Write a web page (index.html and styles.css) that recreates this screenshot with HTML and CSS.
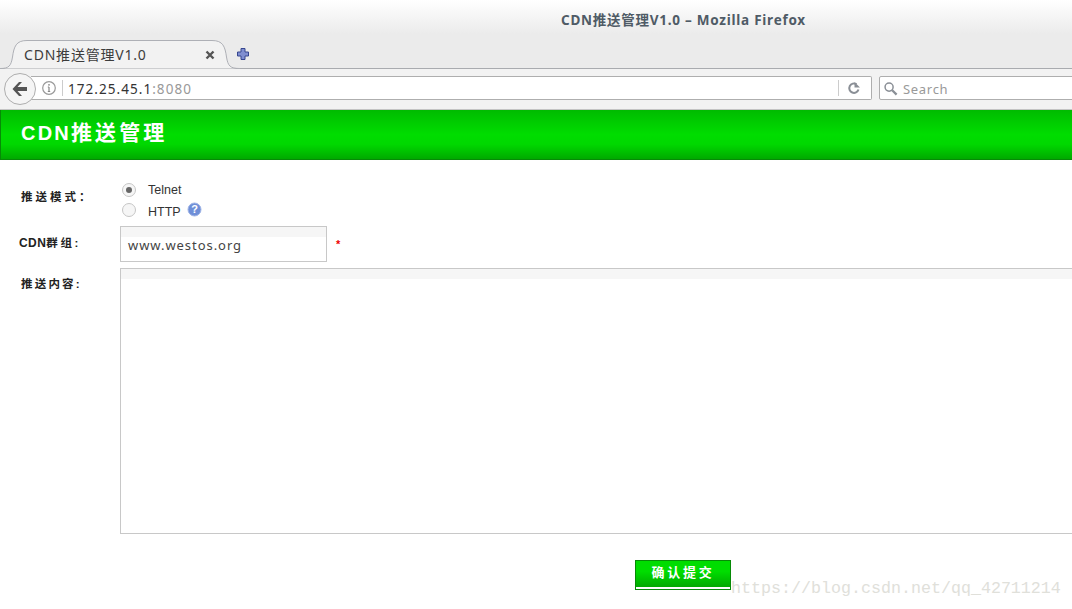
FILE: index.html
```html
<!DOCTYPE html>
<html lang="zh">
<head>
<meta charset="utf-8">
<title>CDN推送管理V1.0</title>
<link rel="stylesheet" href="styles.css">
</head>
<body>
<div class="browser">
  <div class="titlebar">CDN推送管理V1.0 – Mozilla Firefox</div>
  <div class="tabstrip">
    <div class="tab">
      <svg class="tab-shape" width="240" height="30" viewBox="0 0 240 30"><path d="M0 28.500C9 28.500 11 26 12.500 17C14 6.500 16 .5 27 .5H212C223 .5 225 6.500 226.500 17C228 26 230 28.500 240 28.500" fill="#f2f2f2" stroke="#aeb0b6" stroke-width="1"/></svg>
      <span class="tab-title">CDN推送管理V1.0</span>
      <svg class="tab-close" width="10" height="10" viewBox="0 0 10 10"><path d="M1.500 1.500L8.500 8.500M8.500 1.500L1.500 8.500" stroke="#555" stroke-width="2.400"/></svg>
    </div>
    <svg class="newtab" width="14" height="14" viewBox="0 0 14 14"><path d="M5 1.500H9V5H12.500V9H9V12.500H5V9H1.500V5H5Z" fill="#7f8ed0" stroke="#36468f" stroke-width="1"/></svg>
  </div>
  <div class="toolbar">
    <div class="back"><svg width="18" height="16" viewBox="0 0 18 16"><path d="M8 1L1.500 8L8 15H11L6.500 10H16V6H6.500L11 1Z" fill="#555"/></svg></div>
    <div class="urlbar">
      <svg class="info" width="16" height="16" viewBox="0 0 16 16"><circle cx="8" cy="8" r="6.300" fill="none" stroke="#999" stroke-width="1.200"/><path d="M8 7V11.500M6.800 11.500H9.200M6.800 7H8" stroke="#888" stroke-width="1.200" fill="none"/><circle cx="8" cy="4.800" r=".9" fill="#888"/></svg>
      <span class="sep"></span>
      <span class="url"><span class="url-host">172.25.45.1</span>:8080</span>
      <svg class="reload" width="14" height="14" viewBox="0 0 14 14"><path d="M11.500 8.500A4.700 4.700 0 1 1 9.500 3.200" fill="none" stroke="#8a8f96" stroke-width="2"/><path d="M7.500 1V6.500H13Z" fill="#8a8f96"/></svg>
    </div>
    <div class="searchbar">
      <svg width="15" height="15" viewBox="0 0 16 16"><circle cx="6.500" cy="6.500" r="4.300" fill="none" stroke="#8a8f96" stroke-width="1.600"/><path d="M9.800 9.800L14.500 14.500" stroke="#8a8f96" stroke-width="2.400"/></svg>
      <span class="search-text">Search</span>
    </div>
  </div>
</div>
<div class="banner">CDN<span class="banner-cjk">推送管理</span></div>
<form class="form">
  <div class="row row-mode">
    <div class="label label-mode">推送模式：</div>
    <div class="radios">
      <div class="radio-line"><span class="radio radio-on"></span><span>Telnet</span></div>
      <div class="radio-line"><span class="radio radio-raised"></span><span>HTTP</span>
        <svg class="help" width="15" height="15" viewBox="0 0 15 15"><circle cx="7.500" cy="7.500" r="6.500" fill="#6f8fd8" stroke="#9fb4e6"/><text x="7.500" y="11" text-anchor="middle" class="help-q">?</text></svg>
      </div>
    </div>
  </div>
  <div class="row row-group">
    <div class="label label-group"><b>CDN</b>群组:</div>
    <div class="input">www.westos.org</div>
    <span class="req">*</span>
  </div>
  <div class="row row-content">
    <div class="label label-content">推送内容:</div>
    <div class="textarea"></div>
  </div>
  <div class="submit-row"><div class="submit"><span>确认提交</span></div></div>
</form>
<div class="watermark">https://blog.csdn.net/qq_42711214</div>
</body>
</html>
```
FILE: styles.css
```css
* { box-sizing: border-box; }
html, body { margin: 0; height: 609px; overflow: hidden; background: #fff; }
body { width: 1072px; position: relative; font-family: "Liberation Sans", "Noto Sans CJK SC", sans-serif; }
.browser { background: #ebebeb; }
.titlebar {
  height: 34px; padding: 11px 0 0 561px;
  font: 700 13.500px/19px "Noto Sans", "Noto Sans CJK SC", sans-serif; color: #4f5b66; letter-spacing: .75px;
  background: linear-gradient(#ffffff, #ebebeb);
  white-space: nowrap;
}
.tabstrip { height: 35px; display: flex; align-items: flex-end; border-bottom: 1px solid #a9abaf; position: relative; }
.tab { position: relative; width: 230px; height: 29px; flex: none; display: flex; align-items: center; padding: 0 0 0 24px; margin-bottom: -1px; }
.tab-shape { position: absolute; left: 0; top: 0; }
.tab-title { position: relative; font: 14px/20px "Noto Sans", "Noto Sans CJK SC", sans-serif; color: #3c3c3c; white-space: nowrap; width: 181px; letter-spacing: .8px; }
.tab-close { position: relative; }
.newtab { position: relative; margin: 0 0 7px 6px; }
.toolbar { height: 41px; background: #f2f2f2; border-bottom: 1px solid #c4c4c4; display: flex; align-items: center; padding: 0 0 2px 4px; position: relative; }
.back { width: 32px; height: 32px; border-radius: 50%; border: 1px solid #aeaeae; background: #f5f5f5; display: flex; align-items: center; justify-content: center; position: relative; z-index: 1; flex: none; margin-top: 2px; }
.urlbar { height: 24px; width: 841px; margin-left: -5px; flex: none; background: #fff; border: 1px solid #aeaeae; border-left: 0; border-radius: 0 2px 2px 0; display: flex; align-items: center; padding-left: 10px; position: relative; }
.info { flex: none; }
.sep { width: 1px; height: 16px; background: #ccc; margin-left: 5px; flex: none; }
.url { margin-left: 5px; padding-top: 3px; font: 13.500px/17px "Noto Sans", sans-serif; color: #999; flex: 1; letter-spacing: 1.050px; }
.url-host { color: #333; }
.reload { margin-right: 10px; }
.urlbar::after { content: ""; position: absolute; right: 32px; top: 3px; height: 16px; border-left: 1px solid #ccc; }
.searchbar { height: 24px; flex: 1; margin-left: 7px; margin-right: -8px; background: #fff; border: 1px solid #aeaeae; border-radius: 2px; display: flex; align-items: center; gap: 5px; padding-left: 3px; font: 13px/17px "Noto Sans", sans-serif; color: #999; letter-spacing: .7px; }
.search-text { padding-top: 3px; }
.banner {
  height: 50px; padding: 7px 0 0 20px;
  background: linear-gradient(#00bb00, #00dd00 50%, #00d800 70%, #00aa00);
  border: 1px solid #078a07; border-width: 0 0 1px 1px;
  color: #fff; font: 700 20px/32px "Liberation Sans", "Noto Sans CJK SC", sans-serif; letter-spacing: 2.200px;
}
.banner-cjk { font-size: 21px; letter-spacing: 3.100px; }
.form { display: block; }
.label { width: 120px; flex: none; padding-left: 20px; font: 700 11.500px/16px "Liberation Sans", "Noto Sans CJK SC", sans-serif; color: #222; white-space: nowrap; letter-spacing: 1.600px; }
.row { display: flex; }
.row-mode { height: 66px; padding-top: 19px; }
.label-mode { padding-top: 10px; padding-left: 21px; letter-spacing: 3px; }
.radios { display: flex; flex-direction: column; }
.radio-line { display: flex; align-items: center; height: 22px; font-size: 12.500px; color: #333; }
.radio { width: 14px; height: 14px; margin: 0 12px 0 2px; border: 1px solid #c6c6c6; border-radius: 50%; background: #f6f6f6; position: relative; flex: none; }
.radio-raised { margin-top: -5px; }
.radio-on::after { content: ""; position: absolute; left: 3px; top: 3px; width: 6px; height: 6px; border-radius: 50%; background: #666; }
.help { margin-left: 6px; margin-top: -5px; }
.help-q { font: 700 11px "Liberation Sans", sans-serif; fill: #fff; }
.row-group { height: 42px; align-items: flex-start; }
.label-group { padding-top: 9px; padding-left: 19px; letter-spacing: 2.700px; }
.label-group b { letter-spacing: .4px; font-size: 12px; }
.input { width: 207px; height: 36px; border: 1px solid #c8c8c8; padding: 10px 0 0 7px; font: 13px/17px "Noto Sans", sans-serif; color: #444; letter-spacing: .95px; background: linear-gradient(#f6f6f6 10px, #fff 10px); }
.req { color: #e00; font-size: 11px; margin: 12px 0 0 9px; font-weight: 700; }
.row-content { height: 266px; }
.label-content { padding: 8px 0 0 21px; letter-spacing: 2.200px; }
.textarea { width: 960px; height: 266px; border: 1px solid #c8c8c8; border-right: 0; background: linear-gradient(#f6f6f6 10px, #fff 10px); flex: none; }
.submit-row { padding: 26px 0 0 635px; }
.submit { width: 96px; height: 30px; border: 1px solid #078a07; background: #fff; color: #fff; }
.submit span { display: block; height: 26px; padding-top: 3px; text-align: center; font: 700 13px/18px "Liberation Sans", "Noto Sans CJK SC", sans-serif; letter-spacing: 2.800px; background: linear-gradient(#00dd00 40%, #00a800); }
.watermark { position: absolute; left: 731px; top: 578px; font: 16.670px/22px "Liberation Mono", monospace; color: #e0e0da; white-space: nowrap; }
```
